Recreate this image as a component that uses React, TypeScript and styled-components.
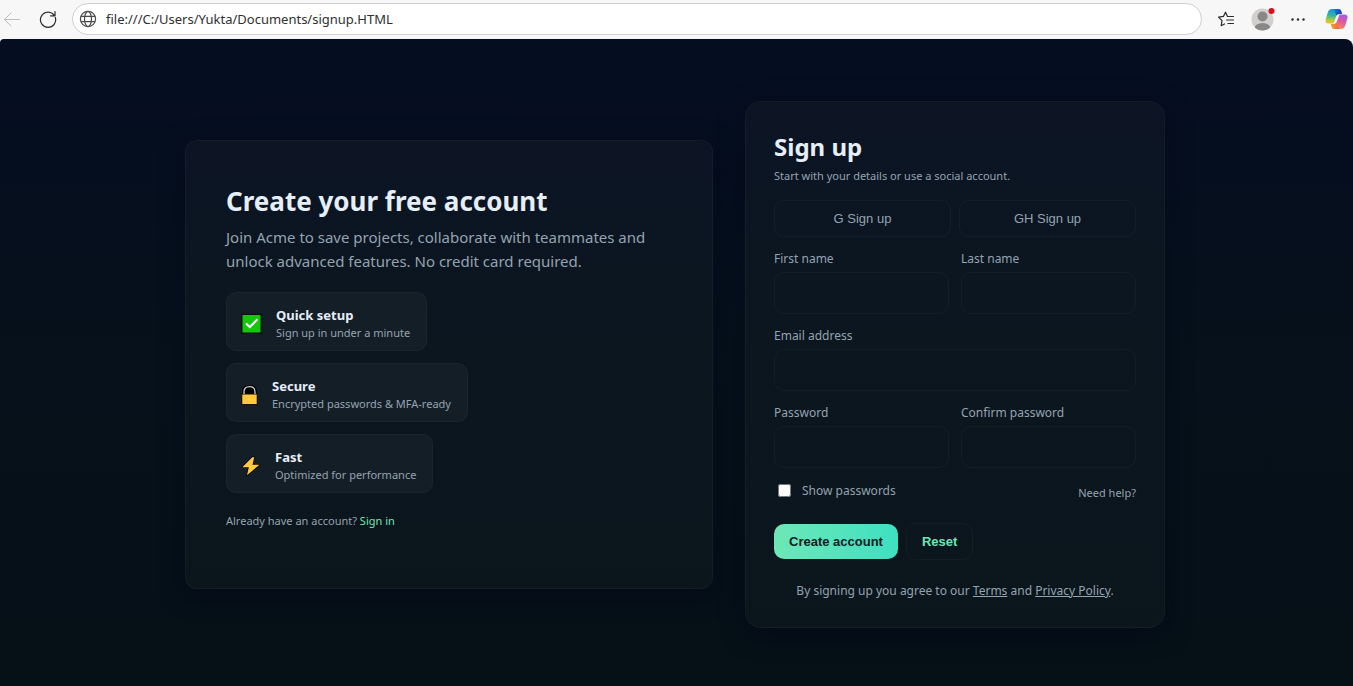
import React, { useState } from "react";
import styled, { createGlobalStyle } from "styled-components";

const uiFont = '"Segoe UI", "Noto Sans", "Open Sans", sans-serif';
const buttonFont = 'Arial, "Liberation Sans", sans-serif';
const muted = "#94a3b0";
const hairline = "rgba(255, 255, 255, 0.035)";

const GlobalStyle = createGlobalStyle`
  *, *::before, *::after { box-sizing: border-box; }
  body { margin: 0; background: #f7f7f7; font-family: ${uiFont}; }
  h1, h2, p { margin: 0; }
`;

const Window = styled.div`
  display: flex;
  flex-direction: column;
  min-height: 100vh;
`;

const Toolbar = styled.header`
  display: flex;
  align-items: center;
  height: 39px;
  padding: 0 5px 2px 2px;
  background: #f7f7f7;
`;

const ToolButton = styled.button<{ $gap?: number }>`
  display: grid;
  place-items: center;
  flex: none;
  margin: 0 0 0 ${(p) => p.$gap ?? 0}px;
  padding: 0;
  border: 0;
  background: none;
  color: #2b2b2b;
  &:disabled { color: #bcbcbc; }
`;

const AddressBar = styled.label`
  display: flex;
  align-items: center;
  flex: 1;
  gap: 9px;
  height: 32px;
  margin-left: 15px;
  padding: 0 8px 0 6px;
  border: 1px solid #cfcfcf;
  border-radius: 16px;
  background: #fff;
  color: #4a4a4a;
`;

const AddressInput = styled.input`
  flex: 1;
  min-width: 0;
  padding: 0;
  border: 0;
  outline: 0;
  background: none;
  color: #303030;
  font: 13px ${uiFont};
`;

const Page = styled.main`
  display: grid;
  place-items: center;
  flex: 1;
  padding: 28px 31px 24px 28px;
  border-radius: 4px 8px 0 0;
  background: linear-gradient(180deg, #050d21 0%, #06111b 50%, #051017 100%);
  color: #e6eef8;
`;

const Columns = styled.div`
  display: grid;
  grid-template-columns: minmax(0, 1fr) 420px;
  align-items: center;
  gap: 32px;
  width: 100%;
  max-width: 980px;
`;

const Card = styled.section<{ $pad: number; $radius: number }>`
  padding: ${(p) => p.$pad}px;
  border: 1px solid ${hairline};
  border-radius: ${(p) => p.$radius}px;
  background: linear-gradient(180deg, #0c1424 0%, #0b1620 35%, #0b151c 100%);
  box-shadow: 0 6px 24px rgba(2, 6, 23, 0.5);
`;

const Title = styled.h1`
  font-size: 26px;
  line-height: 40px;
  font-weight: 700;
`;

const Lead = styled.p`
  margin-top: 4px;
  color: ${muted};
  font-size: 15px;
  line-height: 24px;
`;

const Features = styled.ul`
  display: flex;
  flex-direction: column;
  align-items: flex-start;
  gap: 12px;
  margin: 19px 0 0;
  padding: 0;
  list-style: none;
`;

const Feature = styled.li`
  display: flex;
  align-items: center;
  gap: 12px;
  height: 59px;
  padding: 4px 16px 0 12px;
  border: 1px solid rgba(255, 255, 255, 0.03);
  border-radius: 10px;
  background: #141e27;
`;

const FeatureTitle = styled.strong`
  display: block;
  font-size: 13px;
  line-height: 18px;
`;

const FeatureText = styled.span`
  display: block;
  color: ${muted};
  font-size: 11px;
  line-height: 18px;
`;

const SmallText = styled.p<{ $top?: number; $bottom?: number }>`
  margin: ${(p) => p.$top ?? 0}px 0 ${(p) => p.$bottom ?? 0}px;
  color: ${muted};
  font-size: 11px;
  line-height: 18px;
`;

const AccentLink = styled.a`
  color: #6ee7b7;
  text-decoration: none;
`;

const FormTitle = styled.h2`
  font-size: 24px;
  line-height: 34px;
  font-weight: 700;
`;

const Social = styled.div`
  display: grid;
  grid-template-columns: 1fr 1fr;
  gap: 8px;
  margin-top: 15px;
`;

const SocialButton = styled.button`
  height: 37px;
  padding: 0;
  border: 1px solid ${hairline};
  border-radius: 10px;
  background: transparent;
  color: ${muted};
  font: 13px ${buttonFont};
`;

const Fields = styled.div`
  display: grid;
  grid-template-columns: 1fr 1fr;
  gap: 12px;
  margin-top: 12px;
`;

const Field = styled.label<{ $wide?: boolean }>`
  display: flex;
  flex-direction: column;
  gap: 3px;
  min-width: 0;
  grid-column: ${(p) => (p.$wide ? "1 / -1" : "auto")};
  color: ${muted};
  font-size: 12px;
  line-height: 20px;
`;

const TextInput = styled.input`
  width: 100%;
  height: 42px;
  padding: 0 12px;
  border: 1px solid ${hairline};
  border-radius: 10px;
  background: transparent;
  color: #e6eef8;
  font: 14px ${uiFont};
`;

const Options = styled.div`
  display: flex;
  align-items: center;
  justify-content: space-between;
  margin-top: 12px;
`;

const CheckLabel = styled.label`
  display: flex;
  align-items: center;
  gap: 11px;
  color: ${muted};
  font-size: 12px;
  line-height: 20px;

  input {
    width: 13px;
    height: 13px;
    margin: 0 0 2px 4px;
  }
`;

const HelpLink = styled.a`
  padding-top: 4px;
  color: ${muted};
  font-size: 11px;
  line-height: 18px;
  text-decoration: none;
`;

const Actions = styled.div`
  display: flex;
  align-items: center;
  gap: 8px;
  margin-top: 21px;
`;

const PrimaryButton = styled.button`
  height: 35px;
  padding: 0 15px;
  border: 0;
  border-radius: 10px;
  background: linear-gradient(90deg, #6ee7b7, #3ee0c2);
  color: #052025;
  font: 700 13px ${buttonFont};
`;

const GhostButton = styled.button`
  height: 37px;
  padding: 0 15px;
  border: 1px solid ${hairline};
  border-radius: 10px;
  background: transparent;
  color: #6ee7b7;
  font: 700 13px ${buttonFont};
`;

const Legal = styled.p`
  margin-top: 23px;
  color: ${muted};
  font-size: 12px;
  line-height: 16px;
  text-align: center;

  a { color: inherit; }
`;

const BackIcon = () => (
  <svg width="18" height="18" viewBox="0 0 18 18" fill="none" stroke="currentColor" strokeLinecap="round" strokeLinejoin="round">
    <path d="M17.5 9.500H2.500M9 3L2.500 9.500L9 16" />
  </svg>
);

const ReloadIcon = () => (
  <svg width="18" height="18" viewBox="0 0 18 18" fill="none" stroke="currentColor" strokeWidth="1.200" strokeLinecap="round" strokeLinejoin="round">
    <path d="M16.300 7.500A7.600 7.600 0 1 1 13.500 3.600L15.800 5.800M16 1.500V5.900H11.600" />
  </svg>
);

const GlobeIcon = () => (
  <svg width="18" height="18" viewBox="0 0 18 18" fill="none" stroke="currentColor" strokeWidth="1.200">
    <circle cx="9" cy="9" r="7.600" />
    <ellipse cx="9" cy="9" rx="3.500" ry="7.600" />
    <path d="M2 6.300H16M2 11.700H16" />
  </svg>
);

const FavoritesIcon = () => (
  <svg width="18" height="18" viewBox="0 0 18 18" fill="none" stroke="currentColor" strokeWidth="1.200" strokeLinecap="round" strokeLinejoin="round">
    <path d="M11.300 6.500L10.400 6.300L8.500 2.200L6.400 6.400L1.600 7.100L5 10.600L4.200 15.700L7.500 14" />
    <path d="M11.300 6.500H16.500M9.500 10H16.500M11 13.500H16.500" />
  </svg>
);

const ProfileIcon = () => (
  <svg width="24" height="24" viewBox="0 0 24 24">
    <clipPath id="avatar"><circle cx="11.500" cy="12.500" r="11" /></clipPath>
    <g clipPath="url(#avatar)">
      <rect width="24" height="24" fill="#d2d0ce" />
      <circle cx="11.500" cy="9.500" r="5" fill="#8a8886" />
      <ellipse cx="11.500" cy="21.500" rx="8" ry="5.500" fill="#8a8886" />
    </g>
    <circle cx="20.500" cy="4" r="3" fill="#e00b1c" />
  </svg>
);

const MoreIcon = () => (
  <svg width="16" height="16" viewBox="0 0 16 16" fill="currentColor">
    <circle cx="2.500" cy="8.500" r="1.200" />
    <circle cx="8" cy="8.500" r="1.200" />
    <circle cx="13.500" cy="8.500" r="1.200" />
  </svg>
);

const CopilotIcon = () => (
  <svg width="23" height="22" viewBox="0 0 23 22">
    <defs>
      <linearGradient id="cpLeft" x1="0.500" y1="0" x2="0.400" y2="1">
        <stop offset="0" stopColor="#1b8fe0" />
        <stop offset="0.450" stopColor="#2fb5a8" />
        <stop offset="0.750" stopColor="#a8cc3e" />
        <stop offset="1" stopColor="#f5c21c" />
      </linearGradient>
      <linearGradient id="cpRight" x1="0.700" y1="0" x2="0.300" y2="1">
        <stop offset="0" stopColor="#a45ce8" />
        <stop offset="0.450" stopColor="#e0589c" />
        <stop offset="1" stopColor="#ff9348" />
      </linearGradient>
      <linearGradient id="cpTop" x1="0" y1="0" x2="1" y2="0.600">
        <stop offset="0" stopColor="#1a78d8" />
        <stop offset="1" stopColor="#1b3fb0" />
      </linearGradient>
      <linearGradient id="cpBottom" x1="0" y1="0" x2="1" y2="0">
        <stop offset="0" stopColor="#f7a325" />
        <stop offset="1" stopColor="#f2604e" />
      </linearGradient>
    </defs>
    <path d="M6.500 1H13.500Q15.500 1 16.200 3L17 6H14Q12 6 11.300 8L8.500 15.500H3.500Q0 15.500 0.500 12L3 3.700Q4 1 6.500 1Z" fill="url(#cpLeft)" />
    <path d="M9 1H13.500Q15.500 1 16.200 3L17 6H14Q12.200 6 11.500 7.500Z" fill="url(#cpTop)" />
    <path d="M16.500 21H9.500Q7.500 21 6.800 19L6 16H9Q11 16 11.700 14L14.500 6.500H19.500Q23 6.500 22.500 10L20 18.300Q19 21 16.500 21Z" fill="url(#cpRight)" />
    <path d="M14 21H9.500Q7.500 21 6.800 19L6 16H9Q10.800 16 11.500 14.500Z" fill="url(#cpBottom)" />
  </svg>
);

const CheckIcon = () => (
  <svg width="25" height="22" viewBox="0 0 25 22" aria-hidden="true">
    <rect x="2" y="0.500" width="21" height="20.500" fill="#06120a" />
    <rect x="3.500" y="2" width="18" height="17.500" fill="#16c60c" />
    <path d="M7 10.500L10.800 14L18.500 6.200" fill="none" stroke="#fff" strokeWidth="2" />
  </svg>
);

const LockIcon = () => (
  <svg width="21" height="22" viewBox="0 0 21 22" aria-hidden="true">
    <path d="M4.500 11V8Q4.500 2.500 10.500 2.500Q16.500 2.500 16.500 8V11Z" fill="#000" stroke="#000" strokeWidth="3" />
    <path d="M5 11V8Q5 2.700 10.500 2.700Q16 2.700 16 8V11" fill="#000" stroke="#c8ccd0" strokeWidth="1.300" />
    <rect x="2.500" y="10" width="16" height="11" fill="#151008" />
    <rect x="3.300" y="10.500" width="14.400" height="9.500" fill="#ffc83d" />
  </svg>
);

const BoltIcon = () => (
  <svg width="24" height="22" viewBox="0 0 24 22" aria-hidden="true">
    <path d="M13.300 2.300L3.300 12.300H9.800L8 20.300L20.500 9.700H13.500L15.300 2.300Z" fill="#ffc83d" stroke="#060606" strokeWidth="1.600" strokeLinejoin="round" paintOrder="stroke" />
  </svg>
);

const features = [
  { icon: <CheckIcon />, title: "Quick setup", text: "Sign up in under a minute" },
  { icon: <LockIcon />, title: "Secure", text: "Encrypted passwords & MFA-ready" },
  { icon: <BoltIcon />, title: "Fast", text: "Optimized for performance" },
];

export default function App() {
  const [showPasswords, setShowPasswords] = useState(false);
  const passwordType = showPasswords ? "text" : "password";

  return (
    <Window>
      <GlobalStyle />
      <Toolbar>
        <ToolButton aria-label="Back" disabled><BackIcon /></ToolButton>
        <ToolButton aria-label="Refresh" $gap={19}><ReloadIcon /></ToolButton>
        <AddressBar>
          <GlobeIcon />
          <AddressInput aria-label="Address" defaultValue="file:///C:/Users/Yukta/Documents/signup.HTML" />
        </AddressBar>
        <ToolButton aria-label="Favorites" $gap={15}><FavoritesIcon /></ToolButton>
        <ToolButton aria-label="Profile" $gap={16}><ProfileIcon /></ToolButton>
        <ToolButton aria-label="Settings and more" $gap={15}><MoreIcon /></ToolButton>
        <ToolButton aria-label="Copilot" $gap={19}><CopilotIcon /></ToolButton>
      </Toolbar>
      <Page>
        <Columns>
          <Card $pad={40} $radius={12}>
            <Title>Create your free account</Title>
            <Lead>Join Acme to save projects, collaborate with teammates and unlock advanced features. No credit card required.</Lead>
            <Features>
              {features.map((f) => (
                <Feature key={f.title}>
                  {f.icon}
                  <div>
                    <FeatureTitle>{f.title}</FeatureTitle>
                    <FeatureText>{f.text}</FeatureText>
                  </div>
                </Feature>
              ))}
            </Features>
            <SmallText $top={19} $bottom={18}>
              Already have an account? <AccentLink href="#signin">Sign in</AccentLink>
            </SmallText>
          </Card>
          <Card as="form" $pad={28} $radius={16}>
            <FormTitle>Sign up</FormTitle>
            <SmallText $top={3}>Start with your details or use a social account.</SmallText>
            <Social>
              <SocialButton type="button">G Sign up</SocialButton>
              <SocialButton type="button">GH Sign up</SocialButton>
            </Social>
            <Fields>
              <Field>First name<TextInput name="first" /></Field>
              <Field>Last name<TextInput name="last" /></Field>
              <Field $wide>Email address<TextInput type="email" name="email" /></Field>
              <Field>Password<TextInput type={passwordType} name="password" /></Field>
              <Field>Confirm password<TextInput type={passwordType} name="confirm" /></Field>
            </Fields>
            <Options>
              <CheckLabel>
                <input type="checkbox" checked={showPasswords} onChange={(e) => setShowPasswords(e.target.checked)} />
                Show passwords
              </CheckLabel>
              <HelpLink href="#help">Need help?</HelpLink>
            </Options>
            <Actions>
              <PrimaryButton type="button">Create account</PrimaryButton>
              <GhostButton type="reset">Reset</GhostButton>
            </Actions>
            <Legal>
              By signing up you agree to our <a href="#terms">Terms</a> and <a href="#privacy">Privacy Policy</a>.
            </Legal>
          </Card>
        </Columns>
      </Page>
    </Window>
  );
}
